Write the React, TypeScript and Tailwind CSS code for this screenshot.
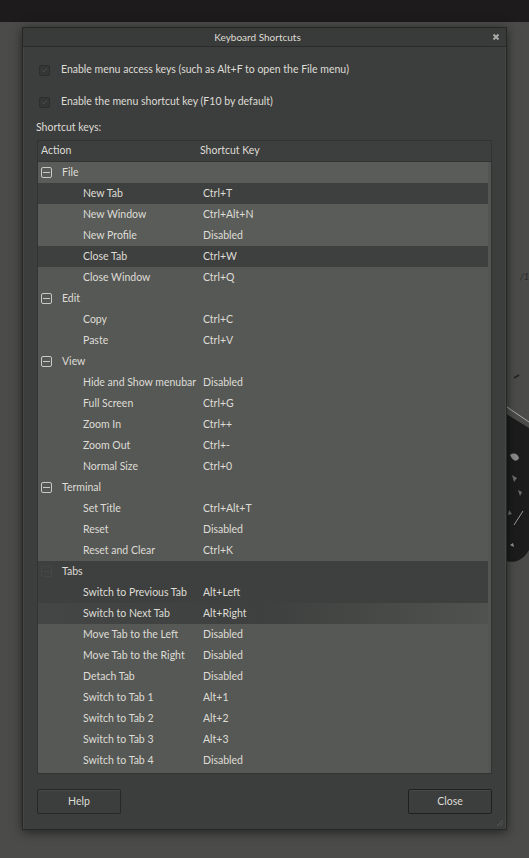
import React from 'react';

type Tone = 'group' | 'dark' | 'mid' | 'next';

interface Row {
  label: string;
  shortcut?: string;
  group?: boolean;
  tone: Tone;
  faint?: boolean;
}

const rows: Row[] = [
  { label: 'File', group: true, tone: 'group' },
  { label: 'New Tab', shortcut: 'Ctrl+T', tone: 'dark' },
  { label: 'New Window', shortcut: 'Ctrl+Alt+N', tone: 'group' },
  { label: 'New Profile', shortcut: 'Disabled', tone: 'group' },
  { label: 'Close Tab', shortcut: 'Ctrl+W', tone: 'dark' },
  { label: 'Close Window', shortcut: 'Ctrl+Q', tone: 'mid' },
  { label: 'Edit', group: true, tone: 'mid' },
  { label: 'Copy', shortcut: 'Ctrl+C', tone: 'mid' },
  { label: 'Paste', shortcut: 'Ctrl+V', tone: 'mid' },
  { label: 'View', group: true, tone: 'mid' },
  { label: 'Hide and Show menubar', shortcut: 'Disabled', tone: 'mid' },
  { label: 'Full Screen', shortcut: 'Ctrl+G', tone: 'mid' },
  { label: 'Zoom In', shortcut: 'Ctrl++', tone: 'mid' },
  { label: 'Zoom Out', shortcut: 'Ctrl+-', tone: 'mid' },
  { label: 'Normal Size', shortcut: 'Ctrl+0', tone: 'mid' },
  { label: 'Terminal', group: true, tone: 'mid' },
  { label: 'Set Title', shortcut: 'Ctrl+Alt+T', tone: 'mid' },
  { label: 'Reset', shortcut: 'Disabled', tone: 'mid' },
  { label: 'Reset and Clear', shortcut: 'Ctrl+K', tone: 'mid' },
  { label: 'Tabs', group: true, tone: 'dark', faint: true },
  { label: 'Switch to Previous Tab', shortcut: 'Alt+Left', tone: 'dark' },
  { label: 'Switch to Next Tab', shortcut: 'Alt+Right', tone: 'next' },
  { label: 'Move Tab to the Left', shortcut: 'Disabled', tone: 'mid' },
  { label: 'Move Tab to the Right', shortcut: 'Disabled', tone: 'mid' },
  { label: 'Detach Tab', shortcut: 'Disabled', tone: 'mid' },
  { label: 'Switch to Tab 1', shortcut: 'Alt+1', tone: 'mid' },
  { label: 'Switch to Tab 2', shortcut: 'Alt+2', tone: 'mid' },
  { label: 'Switch to Tab 3', shortcut: 'Alt+3', tone: 'mid' },
  { label: 'Switch to Tab 4', shortcut: 'Disabled', tone: 'mid' },
];

const toneClass: Record<Tone, string> = {
  group: 'bg-[#5a5c59]',
  dark: 'bg-[#3e403f]',
  mid: 'bg-[#565855]',
  next: 'bg-gradient-to-r from-[#444645] via-[#3e403f] to-[#50524f]',
};

const Expander = ({ faint }: { faint?: boolean }) => (
  <span
    className={`w-[11px] h-[11px] rounded-[2px] border flex items-center justify-center shrink-0 ${
      faint ? 'border-[#454746]' : 'border-[#c9c9c5]'
    }`}
  >
    <span className={`w-[7px] h-px ${faint ? 'bg-[#454746]' : 'bg-[#c9c9c5]'}`} />
  </span>
);

const CheckBox = () => (
  <span className="w-[11px] h-[11px] rounded-[2px] bg-[#353736] border border-[#2c2e2d] flex items-center justify-center shrink-0">
    <svg width="7" height="6" viewBox="0 0 7 6" fill="none">
      <path d="M1 3.2 L2.8 5 L6 1" stroke="#4c4e4d" strokeWidth="1" />
    </svg>
  </span>
);

export default function App() {
  return (
    <div
      className="relative w-[529px] h-[858px] overflow-hidden bg-[#4b4b49] text-[#dedcd6]"
      style={{ fontFamily: 'Lato, "Open Sans", sans-serif' }}
    >
      {/* desktop top panel */}
      <div className="h-[22px] bg-[#1d1b1b]" />

      {/* wallpaper scraps peeking on the right */}
      <svg className="absolute left-[500px] top-[260px]" width="29" height="320" viewBox="0 0 29 320">
        <text x="20" y="20" fontSize="9" fill="#2a2a2a" fontStyle="italic">/1</text>
        <path d="M14 118 l5 -3" stroke="#222" strokeWidth="1.5" />
        <path d="M0 150 L29 168 L29 290 C22 302 12 304 4 300 L0 298 Z" fill="#1c1c1c" />
        <path d="M4 145 L29 162" stroke="#aaa" strokeWidth="1" />
        <path d="M10 195 c4 -3 8 -1 9 3 c-2 4 -6 4 -9 -3" fill="#8a8a8a" />
        <path d="M12 215 l5 3 l-3 4 z M18 230 l4 2 l-2 4 z M9 250 l3 4 l-4 1 z" fill="#6d6d6d" />
        <path d="M14 265 l9 -14" stroke="#9a9a9a" strokeWidth="1" />
        <path d="M10 285 l3 -2 l1 4 z" fill="#999" />
      </svg>

      {/* dialog window */}
      <div className="relative ml-[22px] mt-[5px] w-[485px] h-[803px] flex flex-col bg-[#3c3e3d] border border-[#262827] shadow-[0_2px_10px_rgba(0,0,0,0.55)]">
        {/* title bar */}
        <div className="relative h-[19px] flex items-center justify-center pr-[14px] bg-[#393b3a] border-b border-[#2a2c2b]">
          <span className="text-[10px] text-[#dfdcd4]">Keyboard Shortcuts</span>
          <svg className="absolute right-[6px] top-[5px]" width="8" height="8" viewBox="0 0 8 8">
            <path d="M1.5 1.5 L6.5 6.5 M6.5 1.5 L1.5 6.5" stroke="#a9a9a6" strokeWidth="2" />
          </svg>
        </div>

        {/* body */}
        <div className="flex-1 flex flex-col border-l border-r border-[#454746] px-[13px]">
          <label className="flex items-center gap-[11px] pl-[2px] mt-[16px] h-[14px] text-[10.5px]">
            <CheckBox />
            <span>Enable menu access keys (such as Alt+F to open the File menu)</span>
          </label>
          <label className="flex items-center gap-[11px] pl-[2px] mt-[18px] h-[14px] text-[10.5px]">
            <CheckBox />
            <span>Enable the menu shortcut key (F10 by default)</span>
          </label>
          <div className="text-[10.5px] mt-[12px] h-[12px] leading-[12px] -ml-[1px]">Shortcut keys:</div>

          {/* tree view */}
          <div className="h-[634px] mt-[7px] flex flex-col border border-[#323433] bg-[#535552] pr-[3px] text-[10.5px]">
            <div className="h-[21px] flex items-center bg-[#3d3f3e] border-b border-[#323433] -mr-[3px]">
              <span className="w-[162px] pl-[3px]">Action</span>
              <span>Shortcut Key</span>
            </div>
            {rows.map((r) => (
              <div key={r.label} className={`h-[21px] flex items-center ${toneClass[r.tone]}`}>
                {r.group ? (
                  <div className="flex items-center pl-[3px] gap-[10px]">
                    <Expander faint={r.faint} />
                    <span>{r.label}</span>
                  </div>
                ) : (
                  <>
                    <span className="w-[165px] pl-[45px] shrink-0 whitespace-nowrap">{r.label}</span>
                    <span>{r.shortcut}</span>
                  </>
                )}
              </div>
            ))}
            <div className="flex-1 bg-[#565855]" />
          </div>

          {/* buttons */}
          <div className="flex justify-between mt-[15px]">
            <button className="w-[84px] h-[25px] rounded-[2px] bg-[#3b3e3d] border border-[#262827] shadow-[inset_0_1px_0_rgba(255,255,255,0.06)] text-[10.5px] text-[#dedcd6]">
              Help
            </button>
            <button className="w-[84px] h-[25px] rounded-[2px] bg-[#3b3e3d] border border-[#1f2120] shadow-[inset_0_1px_0_rgba(255,255,255,0.06)] text-[10.5px] text-[#dedcd6]">
              Close
            </button>
          </div>
        </div>

        {/* resize grip */}
        <svg className="absolute right-[2px] bottom-[2px]" width="10" height="10" viewBox="0 0 10 10">
          <path d="M9 3 L3 9 M9 6 L6 9" stroke="#555856" strokeWidth="1" />
        </svg>
      </div>
    </div>
  );
}
